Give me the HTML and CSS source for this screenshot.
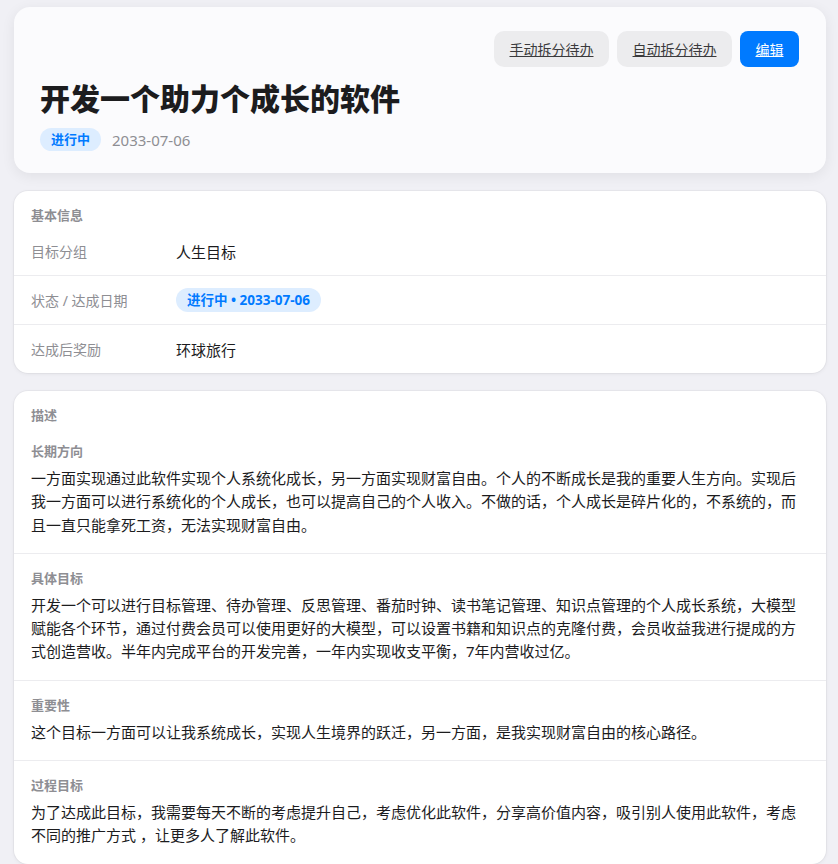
FILE: index.html
```html
<!DOCTYPE html>
<html lang="zh-CN">
<head>
    <meta charset="UTF-8">
    <meta name="viewport" content="width=device-width, initial-scale=1.0">
    <title>目标详情</title>
    <link rel="stylesheet" href="styles.css">
</head>
<body>
    <div class="page">
        <!-- 顶部目标卡片 -->
        <div class="goal-header">
            <div class="actions">
                <a class="btn btn-gray" href="#">手动拆分待办</a>
                <a class="btn btn-gray" href="#">自动拆分待办</a>
                <a class="btn btn-primary" href="#">编辑</a>
            </div>
            <h1 class="goal-title">开发一个助力个成长的软件</h1>
            <div class="goal-meta">
                <span class="badge">进行中</span>
                <span class="goal-date">2033-07-06</span>
            </div>
        </div>

        <!-- 基本信息 -->
        <div class="card">
            <div class="card-title">基本信息</div>
            <div class="info-row">
                <div class="info-label">目标分组</div>
                <div class="info-value">人生目标</div>
            </div>
            <div class="info-row">
                <div class="info-label">状态 / 达成日期</div>
                <div class="info-value"><span class="pill">进行中 • 2033-07-06</span></div>
            </div>
            <div class="info-row">
                <div class="info-label">达成后奖励</div>
                <div class="info-value">环球旅行</div>
            </div>
        </div>

        <!-- 描述 -->
        <div class="card">
            <div class="card-title">描述</div>
            <div class="desc-section">
                <div class="desc-title">长期方向</div>
                <p class="desc-text">一方面实现通过此软件实现个人系统化成长，另一方面实现财富自由。个人的不断成长是我的重要人生方向。实现后我一方面可以进行系统化的个人成长，也可以提高自己的个人收入。不做的话，个人成长是碎片化的，不系统的，而且一直只能拿死工资，无法实现财富自由。</p>
            </div>
            <div class="desc-section">
                <div class="desc-title">具体目标</div>
                <p class="desc-text">开发一个可以进行目标管理、待办管理、反思管理、番茄时钟、读书笔记管理、知识点管理的个人成长系统，大模型赋能各个环节，通过付费会员可以使用更好的大模型，可以设置书籍和知识点的克隆付费，会员收益我进行提成的方式创造营收。半年内完成平台的开发完善，一年内实现收支平衡，7年内营收过亿。</p>
            </div>
            <div class="desc-section">
                <div class="desc-title">重要性</div>
                <p class="desc-text">这个目标一方面可以让我系统成长，实现人生境界的跃迁，另一方面，是我实现财富自由的核心路径。</p>
            </div>
            <div class="desc-section">
                <div class="desc-title">过程目标</div>
                <p class="desc-text">为了达成此目标，我需要每天不断的考虑提升自己，考虑优化此软件，分享高价值内容，吸引别人使用此软件，考虑不同的推广方式 ，让更多人了解此软件。</p>
            </div>
        </div>
    </div>
</body>
</html>
```

FILE: styles.css
```css
body {
    margin: 0;
    background: #f0f0f5;
    font-family: "Noto Sans", "Noto Sans CJK SC", sans-serif;
    color: #1c1c1e;
}

.page {
    padding: 7px 12px 40px 14px;
    display: flex;
    flex-direction: column;
    gap: 18px;
}

.goal-header {
    background: #fbfbfd;
    border-radius: 16px;
    padding: 24px 27px 22px 26px;
    box-shadow: 0 3px 14px rgba(0,0,0,0.07);
}

.actions {
    display: flex;
    justify-content: flex-end;
    gap: 8px;
}

.btn {
    display: block;
    height: 36px;
    line-height: 36px;
    padding: 0 15.5px;
    border-radius: 10px;
    font-size: 14px;
    text-decoration: underline;
    font-family: "Noto Sans CJK SC", sans-serif;
}

.btn-gray {
    background: #ececee;
    color: #3a3a3c;
}

.btn-primary {
    background: #007aff;
    color: white;
    border-radius: 8px;
}

.goal-title {
    margin: 11px 0 12px;
    font-size: 30px;
    line-height: 38px;
    font-weight: 900;
    font-family: "Noto Sans CJK SC", sans-serif;
    color: #1c1c1e;
}

.goal-meta {
    display: flex;
    align-items: center;
    gap: 11px;
}

.badge {
    display: inline-block;
    height: 23px;
    line-height: 23px;
    padding: 0 11px;
    border-radius: 12px;
    background: #ddedff;
    color: #007aff;
    font-size: 13px;
    font-weight: bold;
}

.goal-date {
    font-size: 15px;
    color: #8e8e93;
}

.card {
    background: white;
    border-radius: 14px;
    padding-top: 16px;
    box-shadow: 0 0 0 1px rgba(0,0,0,0.03), 0 1px 4px rgba(0,0,0,0.06);
}

.card-title {
    padding: 0 17px;
    margin-bottom: 4px;
    height: 16px;
    font-size: 13px;
    line-height: 16px;
    font-weight: bold;
    color: #8e8e93;
}

.info-row {
    display: flex;
    align-items: center;
    height: 48px;
    padding: 0 17px;
}

.info-row + .info-row {
    border-top: 1px solid #ececef;
}

.info-label {
    width: 145px;
    flex-shrink: 0;
    font-size: 14px;
    color: #8e8e93;
}

.info-value {
    font-size: 15px;
    color: #1c1c1e;
}

.pill {
    display: inline-block;
    height: 24px;
    line-height: 24px;
    padding: 0 11px;
    border-radius: 12px;
    background: #ddedff;
    color: #007aff;
    font-size: 13.5px;
    font-weight: bold;
}

.desc-section {
    padding: 16px 17px;
}

.desc-section + .desc-section {
    border-top: 1px solid #ececef;
}

.desc-title {
    height: 16px;
    font-size: 13px;
    line-height: 16px;
    font-weight: bold;
    color: #8e8e93;
    margin-bottom: 8px;
}

.desc-text {
    margin: 0;
    font-size: 15px;
    line-height: 23.3px;
    color: #1c1c1e;
}
```
